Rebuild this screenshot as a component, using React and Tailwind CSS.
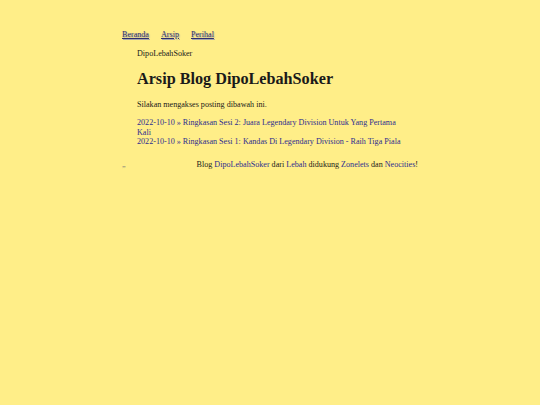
export default function App() {
  return (
    <div className="min-h-[405px] w-full bg-[#ffee88] font-['Liberation_Serif',serif] text-[#1a1a1a]">
      <div className="mx-auto w-[296px] pt-[30px]">
        <nav className="flex gap-[12px] text-[8.1px] leading-[10px]">
          <a className="text-[#2d2d6e] underline [text-shadow:1px_1px_1px_#a8a8a8]">Beranda</a>
          <a className="text-[#2d2d6e] underline [text-shadow:1px_1px_1px_#a8a8a8]">Arsip</a>
          <a className="text-[#2d2d6e] underline [text-shadow:1px_1px_1px_#a8a8a8]">Perihal</a>
        </nav>
        <div className="px-[15px]">
          <p className="mt-[9px] text-[8.1px] leading-[10px]">DipoLebahSoker</p>
          <h1 className="mt-[10px] text-[16.2px] font-bold leading-[20px]">Arsip Blog DipoLebahSoker</h1>
          <p className="mt-[11px] text-[8.1px] leading-[10px]">Silakan mengakses posting dibawah ini.</p>
          <ul className="mt-[8px] text-[8.1px] leading-[9.5px] text-[#2d2d8f]">
            <li>2022-10-10 » Ringkasan Sesi 2: Juara Legendary Division Untuk Yang Pertama Kali</li>
            <li>2022-10-10 » Ringkasan Sesi 1: Kandas Di Legendary Division - Raih Tiga Piala</li>
          </ul>
        </div>
        <footer className="mt-[13px] flex items-center justify-between text-[8.1px] leading-[10px]">
          <span className="text-[#777]">„</span>
          <span>
            Blog <a className="text-[#2d2d8f]">DipoLebahSoker</a> dari <a className="text-[#2d2d8f]">Lebah</a> didukung{" "}
            <a className="text-[#2d2d8f]">Zonelets</a> dan <a className="text-[#2d2d8f]">Neocities</a>!
          </span>
        </footer>
      </div>
    </div>
  );
}
